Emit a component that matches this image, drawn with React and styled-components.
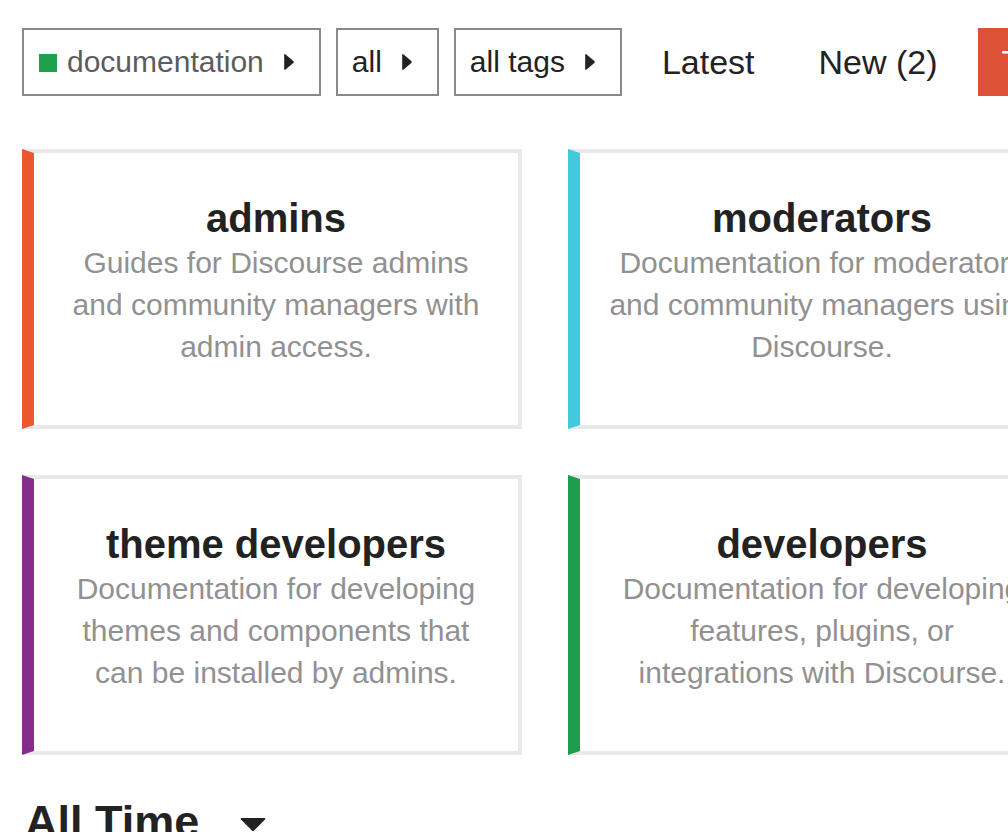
import React from "react";
import styled, { createGlobalStyle } from "styled-components";

const Global = createGlobalStyle`
  html, body {
    margin: 0;
    padding: 0;
    background: #fff;
    overflow: hidden;
  }
  body {
    font-family: "Liberation Sans", Arial, Helvetica, sans-serif;
    color: #222;
  }
`;

const Page = styled.div`
  width: 1200px;
  padding: 28px 0 0 22px;
  box-sizing: border-box;
`;

const Toolbar = styled.div`
  display: flex;
  align-items: center;
  gap: 15px;
  height: 68px;
`;

const Chooser = styled.div`
  display: flex;
  align-items: center;
  height: 68px;
  box-sizing: border-box;
  border: 2px solid #898989;
  padding: 0 25px 0 ${(p) => (p.$swatch ? "15px" : "14px")};
  font-size: 30px;
  color: ${(p) => (p.$muted ? "#5c5c5c" : "#222")};
  white-space: nowrap;
`;

const Swatch = styled.span`
  width: 18px;
  height: 18px;
  background: ${(p) => p.$color};
  margin: 2px 10px 0 0;
  flex: none;
`;

const CaretRight = styled.svg`
  width: 10px;
  height: 18px;
  margin-left: 20px;
  flex: none;
`;

const NavPills = styled.div`
  display: flex;
  align-items: center;
  gap: 16px;
  margin-left: 1px;
`;

const Pill = styled.div`
  height: 68px;
  display: flex;
  align-items: center;
  padding: 0 24px;
  font-size: 34px;
  white-space: nowrap;
  color: ${(p) => (p.$active ? "#fff" : "#222")};
  background: ${(p) => (p.$active ? "#dd5136" : "transparent")};
`;

const Grid = styled.div`
  display: grid;
  grid-template-columns: 500px 500px;
  column-gap: 46px;
  row-gap: 46px;
  margin-top: 53px;
`;

const Card = styled.div`
  box-sizing: border-box;
  border: 4px solid #e9e9e9;
  border-left: 12px solid ${(p) => p.$color};
  padding: 43px 26px 57px;
  text-align: center;
`;

const CardTitle = styled.h3`
  margin: 0;
  font-size: 40px;
  line-height: 44px;
  font-weight: bold;
  color: #222;
`;

const CardDesc = styled.p`
  margin: 2px 0 0;
  font-size: 30px;
  line-height: 42px;
  color: #919191;
`;

const PeriodHeading = styled.h2`
  display: flex;
  align-items: center;
  margin: 41px 0 0 3px;
  font-size: 45px;
  font-weight: bold;
  color: #222;
  white-space: nowrap;
`;

const CaretDown = styled.svg`
  width: 26px;
  height: 14px;
  margin-left: 41px;
  margin-top: 6px;
`;

const RightCaret = () => (
  <CaretRight viewBox="0 0 10 18">
    <path d="M0.2 2.2 Q0.2 0.4 1.6 1.5 L9.3 8 Q10.2 9 9.3 10 L1.6 16.5 Q0.2 17.6 0.2 15.8 Z" fill="#222" />
  </CaretRight>
);

const cards = [
  {
    title: "admins",
    color: "#eb572e",
    desc: ["Guides for Discourse admins and community managers with admin access."],
  },
  {
    title: "moderators",
    color: "#42c9dc",
    desc: ["Documentation for moderators and community managers using Discourse."],
  },
  {
    title: "theme developers",
    color: "#852c8c",
    desc: ["Documentation for developing themes and components that can be installed by admins."],
  },
  {
    title: "developers",
    color: "#1e9e4c",
    desc: ["Documentation for developing features, plugins, or", "integrations with Discourse."],
  },
];

export default function App() {
  return (
    <>
      <Global />
      <Page>
        <Toolbar>
          <Chooser $swatch $muted>
            <Swatch $color="#1fa04b" />
            documentation
            <RightCaret />
          </Chooser>
          <Chooser>
            all
            <RightCaret />
          </Chooser>
          <Chooser>
            all tags
            <RightCaret />
          </Chooser>
          <NavPills>
            <Pill>Latest</Pill>
            <Pill>New (2)</Pill>
            <Pill $active>Top</Pill>
          </NavPills>
        </Toolbar>
        <Grid>
          {cards.map((c) => (
            <Card key={c.title} $color={c.color}>
              <CardTitle>{c.title}</CardTitle>
              <CardDesc>
                {c.desc.map((line, i) => (
                  <React.Fragment key={i}>
                    {i > 0 && <br />}
                    {line}
                  </React.Fragment>
                ))}
              </CardDesc>
            </Card>
          ))}
        </Grid>
        <PeriodHeading>
          All Time
          <CaretDown viewBox="0 0 26 14">
            <path d="M1.6 0 H24.4 Q26 0 25 1.4 L14.1 12.6 Q13 13.7 11.9 12.6 L1 1.4 Q0 0 1.6 0 Z" fill="#222" />
          </CaretDown>
        </PeriodHeading>
      </Page>
    </>
  );
}
